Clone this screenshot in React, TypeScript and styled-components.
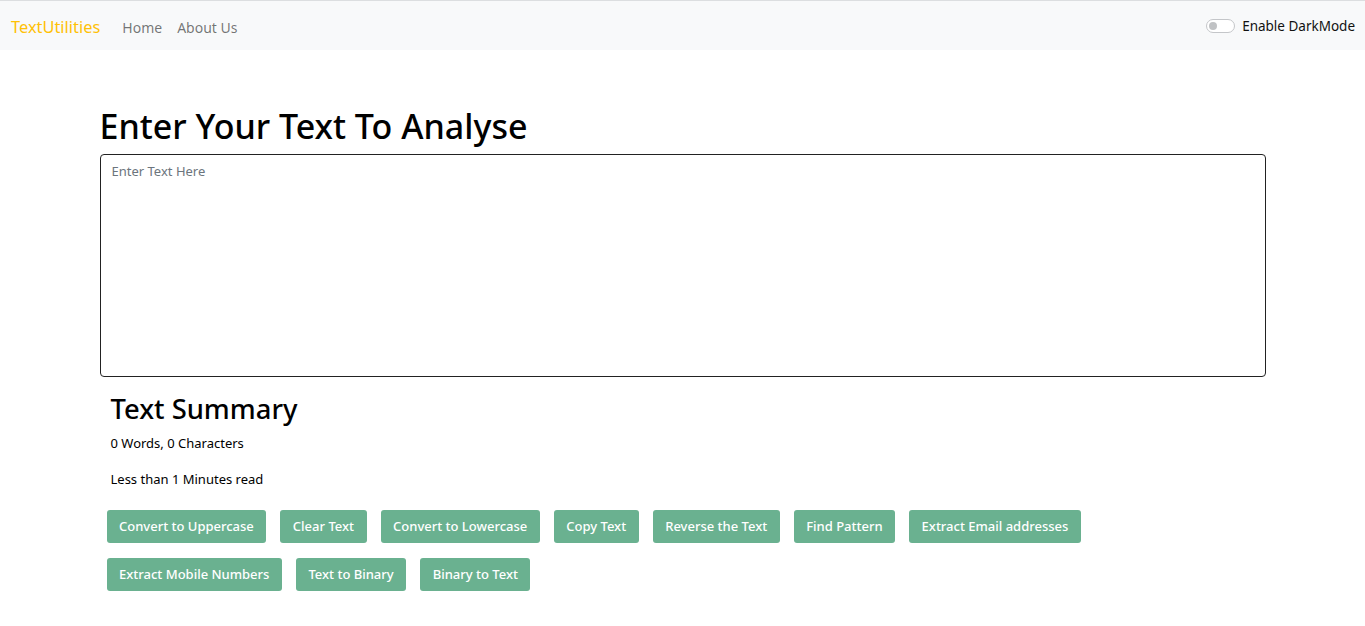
import styled, { createGlobalStyle } from 'styled-components';

const GlobalStyle = createGlobalStyle`
  body {
    margin: 0;
    background: #fff;
    font-family: "Noto Sans", "Open Sans", sans-serif;
    color: #212529;
  }
`;

const buttons = [
    'Convert to Uppercase',
    'Clear Text',
    'Convert to Lowercase',
    'Copy Text',
    'Reverse the Text',
    'Find Pattern',
    'Extract Email addresses',
    'Extract Mobile Numbers',
    'Text to Binary',
    'Binary to Text'
];

const App = () => {
    return (
        <>
            <GlobalStyle />
            <Navbar>
                <Brand>TextUtilities</Brand>
                <NavLinks>
                    <NavLink>Home</NavLink>
                    <NavLink>About Us</NavLink>
                </NavLinks>
                <Toggle>
                    <Switch><Knob /></Switch>
                    <span>Enable DarkMode</span>
                </Toggle>
            </Navbar>
            <Container>
                <Title>Enter Your Text To Analyse</Title>
                <TextArea placeholder="Enter Text Here" />
                <Summary>
                    <SubTitle>Text Summary</SubTitle>
                    <Para>0 Words, 0 Characters</Para>
                    <Para>Less than 1 Minutes read</Para>
                </Summary>
                <ButtonRow>
                    {buttons.map((b) => (
                        <Button key={b}>{b}</Button>
                    ))}
                </ButtonRow>
            </Container>
        </>
    );
};

const Navbar = styled.nav`
    display: flex;
    align-items: center;
    height: 49px;
    padding: 0 10px 0 11px;
    background: #f8f9fa;
    border-top: 1px solid #dcdee0;
`;

const Brand = styled.a`
    color: #ffc107;
    font-size: 16.4px;
    margin-right: 22px;
    padding-top: 2px;
`;

const NavLinks = styled.div`
    display: flex;
    gap: 15px;
    flex: 1;
    padding-top: 3px;
`;

const NavLink = styled.a`
    color: rgba(0, 0, 0, 0.55);
    font-size: 14px;
`;

const Toggle = styled.label`
    display: flex;
    align-items: center;
    gap: 7px;
    font-size: 13.5px;
    color: #111;
`;

const Switch = styled.span`
    display: flex;
    align-items: center;
    box-sizing: border-box;
    width: 29px;
    height: 14px;
    border: 1px solid #c4c6c9;
    border-radius: 7px;
    background: #fff;
    padding: 0 2px;
`;

const Knob = styled.span`
    width: 8px;
    height: 8px;
    border-radius: 50%;
    background: #c0c2c4;
`;

const Container = styled.main`
    width: 1166px;
    margin: 0 auto;
    padding-top: 56px;
`;

const Title = styled.h1`
    font-size: 34px;
    font-weight: 500;
    color: #000;
    margin: 0 0 7px;
    line-height: 1.2;
`;

const TextArea = styled.textarea`
    display: block;
    box-sizing: border-box;
    width: 100%;
    height: 223px;
    border: 1px solid #222;
    border-radius: 4px;
    padding: 7px 11px;
    font-family: inherit;
    font-size: 13px;
    resize: none;
    &::placeholder {
        color: #6c757d;
    }
`;

const Summary = styled.section`
    padding: 16px 11px 0;
`;

const SubTitle = styled.h2`
    font-size: 27.4px;
    font-weight: 500;
    color: #000;
    margin: 0 0 8px;
    line-height: 1.2;
`;

const Para = styled.p`
    font-size: 13px;
    color: #000;
    margin: 0 0 18px;
`;

const ButtonRow = styled.div`
    display: flex;
    flex-wrap: wrap;
    gap: 15px 14px;
    margin-top: 22px;
    padding: 0 7px;
    width: 1000px;
`;

const Button = styled.button`
    height: 33px;
    padding: 0 12.5px;
    border: none;
    border-radius: 3px;
    background: #6ab190;
    color: #fff;
    font-family: inherit;
    font-size: 13px;
    font-weight: 500;
`;

export default App;
